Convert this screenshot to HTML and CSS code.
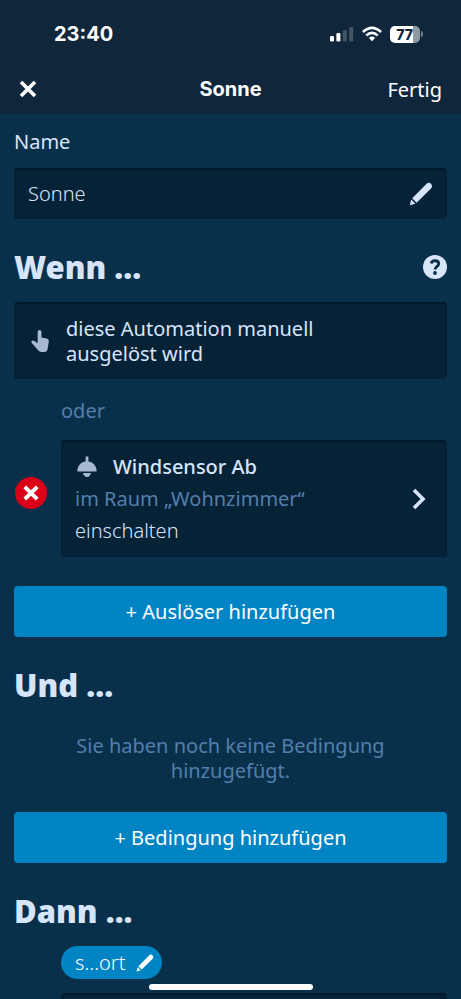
FILE: index.html
```html
<!DOCTYPE html>
<html lang="de">
<head>
<meta charset="utf-8">
<meta name="viewport" content="width=device-width, initial-scale=1">
<title>Sonne</title>
<link rel="stylesheet" href="styles.css">
</head>
<body>
<div class="app">
  <header class="top">
    <div class="status">
      <span class="clock">23:40</span>
      <div class="indicators">
        <svg class="signal" viewBox="0 0 24 16" aria-hidden="true">
          <rect x="0" y="10" width="4" height="5.5" rx="1.3" fill="#fff"/>
          <rect x="6.4" y="7" width="4" height="8.5" rx="1.3" fill="#fff"/>
          <rect x="12.8" y="4" width="4" height="11.5" rx="1.3" fill="#435564"/>
          <rect x="19.2" y="1" width="4" height="14.5" rx="1.3" fill="#435564"/>
        </svg>
        <svg class="wifi" viewBox="0 0 20 16" aria-hidden="true">
          <g fill="none" stroke="#fff" stroke-width="2.700">
            <path d="M1 6Q10 -2.4 19 6"/>
            <path d="M4.3 9.6Q10 4.200 15.700 9.6"/>
          </g>
          <path d="M6.900 12Q10 9.200 13.100 12L10 15.200Z" fill="#fff"/>
        </svg>
        <div class="battery"><span class="battery-level">77</span></div>
      </div>
    </div>
    <nav class="nav">
      <button class="close" type="button" aria-label="Schließen">
        <svg viewBox="0 0 18 18"><path d="M2 2L16 16M16 2L2 16" stroke="#fff" stroke-width="3.700"/></svg>
      </button>
      <h1 class="title">Sonne</h1>
      <button class="done" type="button">Fertig</button>
    </nav>
  </header>

  <main class="content">
    <label class="label" for="name">Name</label>
    <div class="field">
      <input id="name" class="input" type="text" value="Sonne">
      <svg class="pencil" viewBox="0 0 24 24" aria-hidden="true">
        <path d="M3.200 16.200L17.700 1.700Q19.900 -.1 22 1.800Q23.900 4 22.200 6.200L7.600 20.700Z"/>
        <path d="M2.200 17.500L6.400 21.700L.8 23.200Z"/>
      </svg>
    </div>

    <div class="section-head">
      <h2 class="heading">Wenn ...</h2>
      <button class="help" type="button" aria-label="Hilfe">
        <svg viewBox="0 0 24 24">
          <circle cx="12" cy="12" r="12" fill="#d8e6f8"/>
          <path d="M8.300 8.400C8.900 4.900 15.700 4.900 15.700 8.700C15.700 11.400 12.100 11.200 12.100 14.600" fill="none" stroke="#08304b" stroke-width="2.900"/>
          <circle cx="12" cy="18" r="1.900" fill="#08304b"/>
        </svg>
      </button>
    </div>
    <section class="card manual">
      <svg class="hand" viewBox="0 0 20 24" aria-hidden="true">
        <path d="M7 2.600Q7 .5 9 .5Q11 .5 11 2.600V8.300L16.700 9.400Q18.900 10 18.800 12.300L17.300 21.300Q16.800 23.500 14.800 23.500H10.800Q9 23.500 7.700 22.100L.8 14.200Q-.2 12.700 1.100 11.800Q2.200 11.100 3.500 12L7 14.300Z"/>
      </svg>
      <p class="text">diese Automation manuell ausgelöst wird</p>
    </section>
    <p class="or">oder</p>
    <div class="trigger">
      <button class="remove" type="button" aria-label="Entfernen">
        <svg viewBox="0 0 32 32">
          <circle cx="16" cy="16" r="16" fill="#da0017"/>
          <path d="M9.800 9.800L22.200 22.200M22.200 9.800L9.800 22.200" stroke="#fff" stroke-width="4"/>
        </svg>
      </button>
      <a class="card device" href="#">
        <span class="device-text">
          <span class="device-name">
            <svg class="lamp" viewBox="0 0 20 22" aria-hidden="true">
              <path d="M8.600 .5H11.400V5.600C16 6 19.500 9.600 19.700 15.500H.3C.5 9.600 4 6 8.600 5.600Z"/>
              <path d="M6 17H14Q13 21 10 21Q7 21 6 17Z"/>
            </svg>
            <span>Windsensor Ab</span>
          </span>
          <span class="room">im Raum „Wohnzimmer“</span>
          <span class="action">einschalten</span>
        </span>
        <svg class="chevron" viewBox="0 0 14 22" aria-hidden="true"><path d="M2 2L11 11L2 20" fill="none" stroke="#d7e5fb" stroke-width="3.600"/></svg>
      </a>
    </div>
    <button class="add" type="button">+ Auslöser hinzufügen</button>

    <div class="section-head"><h2 class="heading">Und ...</h2></div>
    <p class="empty">Sie haben noch keine Bedingung hinzugefügt.</p>
    <button class="add" type="button">+ Bedingung hinzufügen</button>

    <div class="section-head"><h2 class="heading">Dann ...</h2></div>
    <button class="pill" type="button">
      <span>s...ort</span>
      <svg class="pencil-small" viewBox="0 0 24 24" aria-hidden="true">
        <path d="M3.200 16.200L17.700 1.700Q19.900 -.1 22 1.800Q23.900 4 22.200 6.200L7.600 20.700Z"/>
        <path d="M2.200 17.500L6.400 21.700L.8 23.200Z"/>
      </svg>
    </button>
    <div class="card next"></div>
  </main>
  <div class="home-bar"></div>
</div>
</body>
</html>
```
FILE: styles.css
```css
* { box-sizing: border-box; }

body {
  margin: 0;
  background: #08304b;
  color: #d7e5fb;
  font: 400 20px/25px "Noto Sans", sans-serif;
}

h1, h2, p { margin: 0; }

button {
  margin: 0;
  padding: 0;
  border: 0;
  background: none;
  color: inherit;
  font: inherit;
}

svg { display: block; flex: none; }

.app {
  position: relative;
  height: 100vh;
  overflow: hidden;
}

.top {
  background: #10273b;
  color: #fff;
}

.status {
  display: flex;
  align-items: center;
  justify-content: space-between;
  height: 64px;
  padding: 4px 38px 0 54px;
}

.clock {
  font: 700 20px/24px Inter, sans-serif;
}

.indicators {
  display: flex;
  align-items: center;
  gap: 8px;
}

.signal { width: 24px; height: 16px; }
.wifi { width: 20px; height: 16px; }

.battery {
  position: relative;
  width: 30px;
  height: 17px;
  margin-right: 3px;
  padding-right: 1px;
  border-radius: 5px;
  background: linear-gradient(90deg, #fff 77%, #8d99a3 77%);
  color: #10273b;
  text-align: center;
}

.battery::after {
  content: "";
  position: absolute;
  top: 5px;
  right: -3px;
  width: 2px;
  height: 6px;
  border-radius: 0 2px 2px 0;
  background: #6d7c89;
}

.battery-level {
  display: block;
  font: 800 14px/17px Inter, sans-serif;
}

.nav {
  display: grid;
  grid-template-columns: 1fr auto 1fr;
  align-items: center;
  height: 50px;
  padding: 0 19px;
}

.close svg { width: 18px; height: 18px; }

.title {
  font: 700 20px/24px Inter, sans-serif;
}

.done {
  justify-self: end;
  font-weight: 400;
}

.content { padding: 15px 14px 0; }

.label {
  display: block;
  margin-bottom: 14px;
}

.field, .card {
  border-radius: 4px;
  background: #062237;
  box-shadow: inset 0 2px 2px #041a2b;
}

.field {
  display: flex;
  align-items: center;
  height: 51px;
  padding: 0 14px;
}

.input {
  flex: 1;
  min-width: 0;
  padding: 0;
  border: 0;
  outline: 0;
  background: none;
  color: inherit;
  font: 300 20px/25px "Noto Sans", sans-serif;
}

.pencil { width: 24px; height: 24px; fill: #d7e5fb; }

.section-head {
  display: flex;
  align-items: center;
  justify-content: space-between;
  margin: 30px 0 17px;
}

.heading {
  font: 900 31px/36px "Noto Sans", sans-serif;
}

.help svg { width: 24px; height: 24px; }

.manual {
  display: flex;
  align-items: center;
  gap: 16px;
  min-height: 77px;
  padding: 13px 80px 13px 17px;
}

.hand { width: 19px; height: 24px; fill: #a7b9d1; }

.or {
  margin: 19px 0 17px 47px;
  color: #527fac;
}

.trigger {
  display: grid;
  grid-template-columns: 33px 1fr;
  align-items: center;
  gap: 14px;
}

.remove svg { width: 32px; height: 32px; }

.trigger .remove {
  justify-self: end;
  margin-top: -12px;
}

.device {
  display: flex;
  align-items: center;
  justify-content: space-between;
  padding: 11px 21px 10px 14px;
  color: inherit;
  line-height: 32px;
  text-decoration: none;
}

.device-text {
  display: flex;
  flex-direction: column;
}

.device-name {
  display: flex;
  align-items: center;
  gap: 14px;
  font-weight: 500;
}

.lamp { width: 24px; height: 22px; fill: #a7b9d1; }
.room { color: #527fac; }
.action { font-weight: 300; }
.chevron { width: 14px; height: 22px; }

.add {
  display: block;
  width: 100%;
  height: 51px;
  margin-top: 29px;
  border-radius: 4px;
  background: #0084c3;
  color: #fff;
}

.empty {
  padding: 13px 40px 0;
  color: #527fac;
  text-align: center;
}

.pill {
  display: flex;
  align-items: center;
  gap: 10px;
  height: 33px;
  margin-left: 47px;
  padding: 0 8px 0 14px;
  border-radius: 17px;
  background: #0084c3;
  color: #fff;
  font-weight: 300;
}

.pencil-small { width: 18px; height: 18px; fill: #fff; }

.next {
  height: 77px;
  margin: 14px 0 0 47px;
}

.home-bar {
  position: absolute;
  bottom: 9px;
  left: 50%;
  width: 164px;
  height: 6px;
  border-radius: 3px;
  background: #fff;
  transform: translateX(-50%);
}
```
